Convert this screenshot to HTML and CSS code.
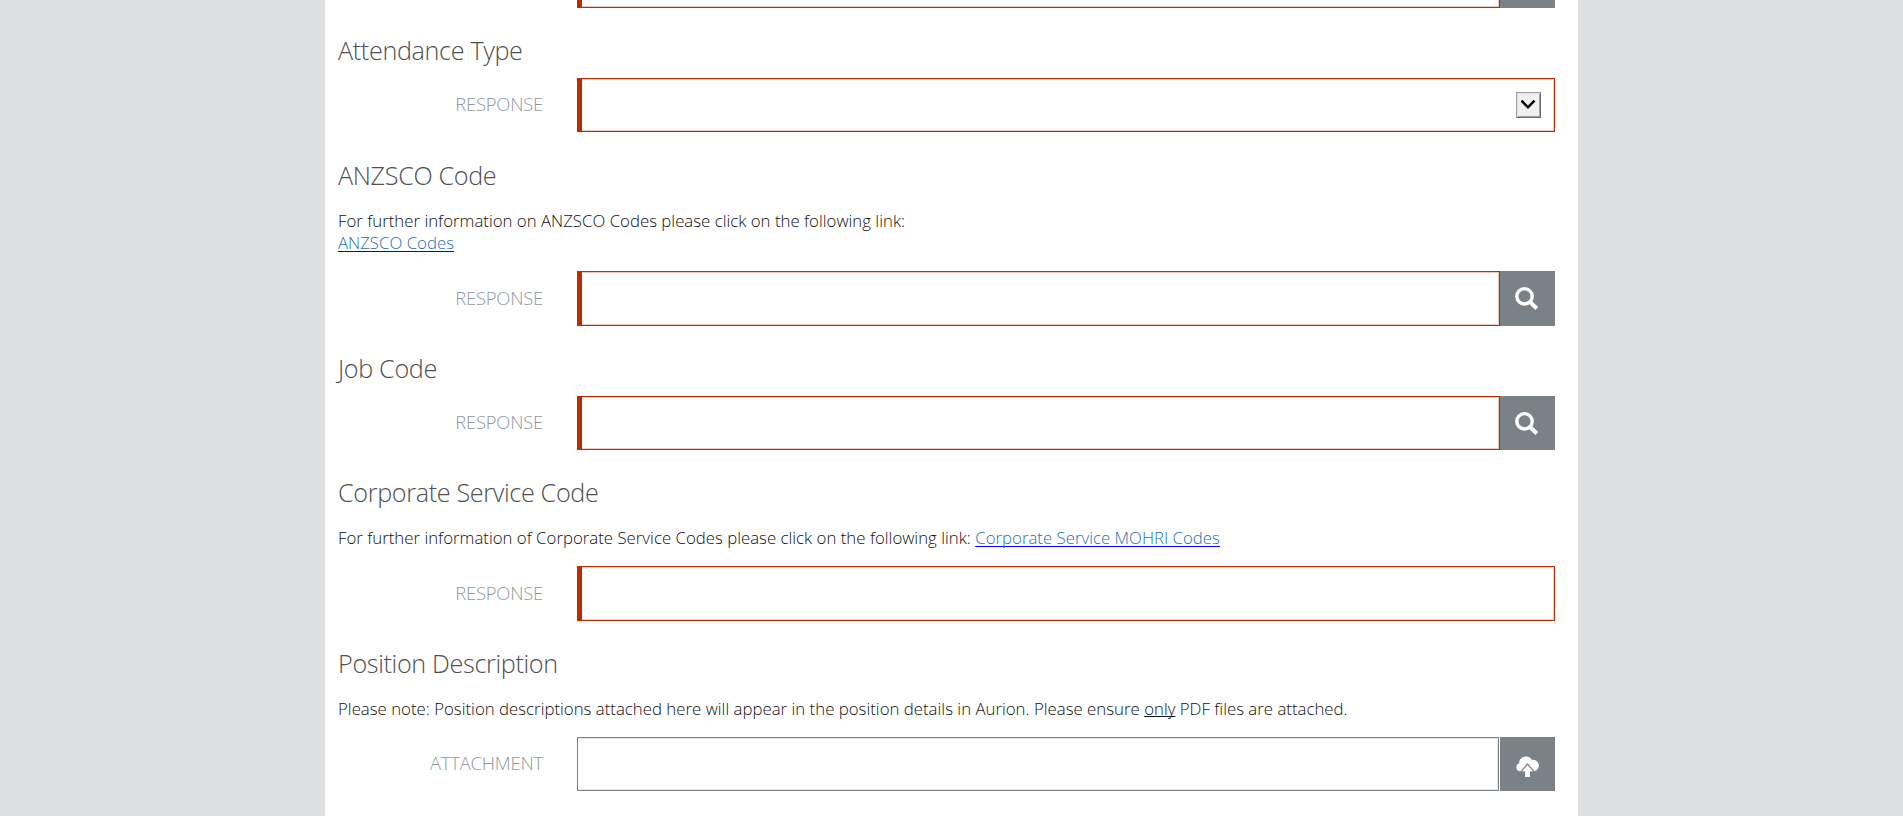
FILE: index.html
```
<!DOCTYPE html>
<html lang="en">
<head>
<meta charset="utf-8">
<title>Position Form</title>
<link rel="stylesheet" href="styles.css">
</head>
<body>
<main class="panel">
  <div class="row row-first">
    <div class="label"></div>
    <div class="field required"></div><div class="action"></div>
  </div>

  <h2 class="heading">Attendance Type</h2>
  <div class="row">
    <div class="label">RESPONSE</div>
    <div class="field required select">
      <span class="arrow"><svg width="15" height="12" viewBox="0 0 15 12"><path d="M.5 1.600 7 8.300 13.500 1.600" fill="none" stroke="#000" stroke-width="2.500"/></svg></span>
    </div>
  </div>

  <h2 class="heading heading-low">ANZSCO Code</h2>
  <p class="note note-double">For further information on ANZSCO Codes please click on the following link:<br><a class="link" href="#">ANZSCO Codes</a></p>
  <div class="row row-tall">
    <div class="label">RESPONSE</div>
    <div class="field required"></div>
    <div class="action"><svg width="27" height="27" viewBox="0 0 27 27"><circle cx="10.500" cy="11.300" r="7.700" fill="none" stroke="#fff" stroke-width="3.400"/><path d="M15.800 16.800 22.800 23.500" stroke="#fff" stroke-width="4"/></svg></div>
  </div>

  <h2 class="heading">Job Code</h2>
  <div class="row">
    <div class="label">RESPONSE</div>
    <div class="field required"></div>
    <div class="action"><svg width="27" height="27" viewBox="0 0 27 27"><circle cx="10.500" cy="11.300" r="7.700" fill="none" stroke="#fff" stroke-width="3.400"/><path d="M15.800 16.800 22.800 23.500" stroke="#fff" stroke-width="4"/></svg></div>
  </div>

  <h2 class="heading">Corporate Service Code</h2>
  <p class="note">For further information of Corporate Service Codes please click on the following link: <a class="link" href="#">Corporate Service MOHRI Codes</a></p>
  <div class="row row-tall">
    <div class="label">RESPONSE</div>
    <div class="field required"></div>
  </div>

  <h2 class="heading">Position Description</h2>
  <p class="note">Please note: Position descriptions attached here will appear in the position details in Aurion. Please ensure <u class="only">only</u> PDF files are attached.</p>
  <div class="row">
    <div class="label">ATTACHMENT</div>
    <div class="field upload"></div>
    <div class="action"><svg width="27" height="27" viewBox="0 0 27 27"><path d="M6 20.300A4.200 4.200 0 0 1 5 12.200 7 7 0 0 1 18 9 5.700 5.700 0 1 1 20.300 20.300Z" fill="#fff"/><path d="M13.500 12 20.800 20.500H6.200Z" fill="#7a8187"/><path d="M13.500 14 19 20.300H16V26H11V20.300H8Z" fill="#fff"/></svg></div>
  </div>
</main>
</body>
</html>
```

FILE: styles.css
```
* { box-sizing: border-box; }
html, body { margin: 0; height: 100%; overflow: hidden; }
body {
  background: #dedfe1;
  font-family: "Open Sans", sans-serif;
  font-weight: 300;
}
.panel {
  width: 1253px;
  height: 816px;
  margin-left: 325px;
  padding: 0 23px 0 13px;
  background: #fff;
}
.row { display: flex; height: 54px; }
.row-tall { height: 55px; }
.row-first { height: 8px; }
.row-first .field { border-top: 0; box-shadow: inset -1px -1px 0 #efc9bd; }
.label {
  width: 239px;
  padding-right: 34px;
  text-align: right;
  font-size: 18.4px;
  letter-spacing: -0.2px;
  line-height: 51px;
  color: #91989c;
}
.row-tall .label { line-height: 53px; }
.field {
  flex: 1;
  background: #fff;
  border: 1px solid #7a8187;
  box-shadow: inset -1px -1px 0 #e4e6e7, inset 0 1px 0 #e4e6e7;
}
.required {
  border: 1px solid #bd2b00;
  border-left: 5px solid #bd2b00;
  box-shadow: inset -1px -1px 0 #efc9bd, inset 0 1px 0 #efc9bd;
}
.upload { margin-right: 1px; }
.select {
  display: flex;
  align-items: center;
  justify-content: flex-end;
  padding-right: 13px;
}
.arrow {
  display: flex;
  align-items: center;
  justify-content: center;
  width: 25px;
  height: 26px;
  background: #f0f0f0;
  border: 1px solid #a0a0a0;
  border-right-color: #696969;
  border-bottom-color: #696969;
  box-shadow: inset 1px 1px 0 #e3e3e3, inset -1px -1px 0 #a0a0a0;
}
.action {
  display: flex;
  align-items: flex-start;
  justify-content: center;
  width: 55px;
  padding-top: 14px;
  background: #7a8187;
  overflow: hidden;
}
.row-first .action { padding-top: 0; }
.heading {
  height: 70px;
  margin: 0;
  padding-top: 24px;
  font-size: 25.2px;
  font-weight: 300;
  letter-spacing: -0.35px;
  line-height: 36px;
  color: #505050;
}
.heading-low { padding-top: 25px; }
.note {
  height: 46px;
  margin: 0;
  padding-top: 7px;
  font-size: 16.8px;
  letter-spacing: 0.01px;
  line-height: 22px;
  color: #111;
  white-space: nowrap;
}
.note-double { height: 69px; padding-top: 8px; }
.link {
  color: #2570b8;
  text-decoration: underline #00f 1px;
  text-underline-offset: 2px;
  text-decoration-skip-ink: none;
}
.only { text-decoration-skip-ink: none; }
```
